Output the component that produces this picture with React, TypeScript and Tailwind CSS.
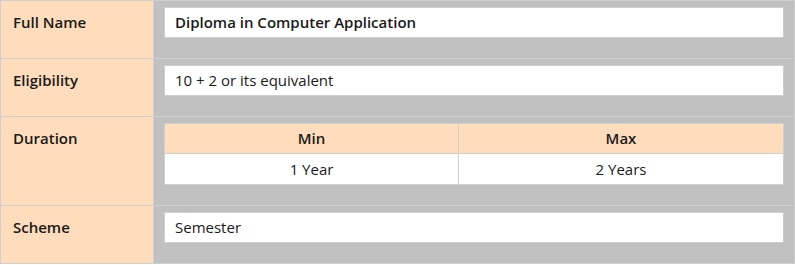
const rows = [
  { label: 'Full Name', value: 'Diploma in Computer Application', strong: true },
  { label: 'Eligibility', value: '10 + 2 or its equivalent' },
  { label: 'Duration', value: null },
  { label: 'Scheme', value: 'Semester' },
];

// Min / Max duration sub-table
function DurationTable() {
  return (
    <table className="w-full table-fixed border-collapse mb-[20px]">
      <colgroup>
        <col className="w-[294px]" />
        <col />
      </colgroup>
      <thead>
        <tr className="bg-[#ffdcbb]">
          <th className="border border-[#cfcfcf] px-[10px] pt-[4px] pb-[5px] text-center font-semibold leading-5">Min</th>
          <th className="border border-[#cfcfcf] px-[10px] pt-[4px] pb-[5px] text-center font-semibold leading-5">Max</th>
        </tr>
      </thead>
      <tbody>
        <tr className="bg-white">
          <td className="border border-[#cfcfcf] px-[10px] py-[5px] text-center leading-5">1 Year</td>
          <td className="border border-[#cfcfcf] px-[10px] py-[5px] text-center leading-5">2 Years</td>
        </tr>
      </tbody>
    </table>
  );
}

export default function App() {
  return (
    <div className="bg-white font-['Open_Sans',sans-serif] text-[15px] text-[#1a1a1a]">
      <table className="w-[795px] table-fixed border-collapse">
        <colgroup>
          <col className="w-[153px]" />
          <col />
        </colgroup>
        <tbody>
          {rows.map((row) => (
            <tr key={row.label}>
              <th className="border border-[#cfcfcf] bg-[#ffdcbb] pl-[12px] pt-[11px] text-left align-top font-semibold leading-5">
                {row.label}
              </th>
              <td className="border border-[#cfcfcf] bg-[#c0c0c0] px-[10px] pt-[6px] pb-0 align-top">
                {row.value === null ? (
                  <DurationTable />
                ) : (
                  <div
                    className={
                      'mb-[20px] border border-[#cfcfcf] bg-white px-[10px] pt-[4px] pb-[5px] leading-5' +
                      (row.strong ? ' font-semibold' : '')
                    }
                  >
                    {row.value}
                  </div>
                )}
              </td>
            </tr>
          ))}
        </tbody>
      </table>
    </div>
  );
}
